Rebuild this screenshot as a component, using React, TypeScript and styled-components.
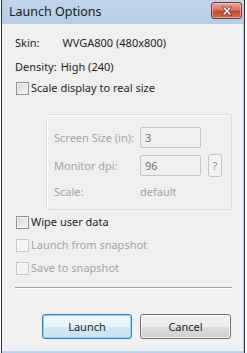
import React from "react";
import styled, { createGlobalStyle } from "styled-components";

const GlobalStyle = createGlobalStyle`
  html, body {
    margin: 0;
    padding: 0;
    background: #ffffff;
  }
  body {
    font-family: "Noto Sans", "Open Sans", sans-serif;
    font-size: 11px;
    color: #1e1e1e;
  }
`;

const Page = styled.div`
  width: 247px;
  height: 353px;
  padding-left: 1px;
  box-sizing: border-box;
`;

const Window = styled.div`
  width: 244px;
  height: 353px;
  box-sizing: border-box;
  border-left: 1px solid #2b2b2b;
  border-right: 1px solid #2b2b2b;
  background: #bcd2ea;
  display: flex;
  flex-direction: column;
`;

const TitleBar = styled.div`
  height: 24px;
  flex: none;
  display: flex;
  align-items: center;
  justify-content: space-between;
  padding: 0 2px 0 7px;
  background: linear-gradient(#c0d5ec, #bad0e9 60%, #b8cee8);
`;

const Title = styled.span`
  font-size: 12.5px;
  color: #1a1a1a;
  margin-top: -2px;
`;

const CloseButton = styled.button`
  width: 31px;
  height: 17px;
  margin-top: -3px;
  padding: 0;
  border: 1px solid #6e3a34;
  border-radius: 3px;
  background: linear-gradient(#e4a79c, #d67766 45%, #c4472f 55%, #cf6a50);
  box-shadow: inset 0 0 0 1px rgba(255, 220, 210, 0.5);
  display: flex;
  align-items: center;
  justify-content: center;
`;

const Body = styled.div`
  flex: 1;
  margin: 0 1px 3px 0;
  border-left: 1px solid #fafafa;
  background: #f0f0f0;
  display: flex;
  flex-direction: column;
  padding: 11px 11px 12px 12px;
`;

const InfoRow = styled.div<{ $gap: number; $mt?: number }>`
  display: flex;
  height: 16px;
  align-items: center;
  line-height: 16px;
  gap: ${(p) => p.$gap}px;
  margin-top: ${(p) => p.$mt ?? 0}px;
`;

const CheckRow = styled.label<{ $mt: number; $disabled?: boolean }>`
  display: flex;
  align-items: center;
  height: 16px;
  line-height: 16px;
  gap: 2px;
  margin-top: ${(p) => p.$mt}px;
  padding-left: 1px;
  color: ${(p) => (p.$disabled ? "#a3a3a3" : "#1e1e1e")};
`;

const Box = styled.span<{ $disabled?: boolean }>`
  width: 13px;
  height: 13px;
  box-sizing: border-box;
  flex: none;
  border: 1px solid ${(p) => (p.$disabled ? "#c9c9c9" : "#8e8f8f")};
  background: ${(p) =>
    p.$disabled
      ? "#f4f4f4"
      : "linear-gradient(135deg, #d2d2d2, #e6e6e6 50%, #f6f6f6)"};
  box-shadow: inset 0 0 0 1px ${(p) => (p.$disabled ? "#f8f8f8" : "#f4f4f4")};
`;

const Group = styled.div`
  margin: 18px 0 0 31px;
  width: 186px;
  height: 96px;
  box-sizing: border-box;
  border: 1px solid #d5dfe5;
  border-radius: 3px;
  box-shadow: inset 1px 1px 0 #ffffff;
  padding: 12px 0 0 7px;
  display: grid;
  grid-template-columns: 79px 61px 14px;
  grid-template-rows: 21px 23px 16px;
  column-gap: 7px;
  row-gap: 6px;
  align-items: center;
  white-space: nowrap;
  color: #a3a3a3;
`;

const Field = styled.div`
  height: 21px;
  box-sizing: border-box;
  border: 1px solid #c4c4c4;
  border-radius: 2px;
  background: #f0f0f0;
  color: #6d6d6d;
  padding-left: 4px;
  line-height: 19px;
`;

const HelpButton = styled.div`
  height: 23px;
  box-sizing: border-box;
  border: 1px solid #c3c3c3;
  border-radius: 3px;
  background: #f4f4f4;
  color: #8b90a6;
  text-align: center;
  line-height: 21px;
`;

const Separator = styled.div`
  height: 1px;
  margin: 11px 0 0 0;
  width: 217px;
  background: #a0a0a0;
  box-shadow: 0 1px 0 #ffffff;
`;

const ButtonRow = styled.div`
  display: flex;
  justify-content: flex-end;
  gap: 8px;
  margin-top: 26px;
  padding-right: 1px;
`;

const DialogButton = styled.button<{ $primary?: boolean }>`
  width: ${(p) => (p.$primary ? 90 : 91)}px;
  height: 25px;
  padding: 0;
  font-family: inherit;
  font-size: 11px;
  color: #1e1e1e;
  border-radius: 3px;
  border: 1px solid ${(p) => (p.$primary ? "#3c7fb1" : "#707070")};
  background: ${(p) =>
    p.$primary
      ? "linear-gradient(#f1f8fc, #e7f2f9 50%, #d5e8f4 51%, #c9e1f1)"
      : "linear-gradient(#f2f2f2, #ebebeb 50%, #dddddd 51%, #cfcfcf)"};
  box-shadow: ${(p) =>
    p.$primary
      ? "inset 0 0 0 1px #8fd3f4"
      : "inset 0 0 0 1px rgba(255,255,255,0.7)"};
`;

function CloseGlyph() {
  return (
    <svg width="14" height="10" viewBox="0 0 14 10">
      <path
        d="M2 1 L5 1 L7 3.5 L9 1 L12 1 L8.6 5 L12 9 L9 9 L7 6.5 L5 9 L2 9 L5.4 5 Z"
        fill="#ffffff"
        stroke="#5a2a26"
        strokeWidth="0.8"
        strokeLinejoin="round"
      />
    </svg>
  );
}

function Check({
  label,
  mt,
  disabled,
}: {
  label: string;
  mt: number;
  disabled?: boolean;
}) {
  return (
    <CheckRow $mt={mt} $disabled={disabled}>
      <Box $disabled={disabled} />
      {label}
    </CheckRow>
  );
}

export default function App() {
  return (
    <Page>
      <GlobalStyle />
      <Window>
        <TitleBar>
          <Title>Launch Options</Title>
          <CloseButton aria-label="Close">
            <CloseGlyph />
          </CloseButton>
        </TitleBar>
        <Body>
          <InfoRow $gap={23}>
            <span>Skin:</span>
            <span>WVGA800 (480x800)</span>
          </InfoRow>
          <InfoRow $gap={4} $mt={8}>
            <span>Density:</span>
            <span>High (240)</span>
          </InfoRow>
          <Check label="Scale display to real size" mt={5} />
          <Group>
            <span>Screen Size (in):</span>
            <Field>3</Field>
            <span />
            <span>Monitor dpi:</span>
            <Field>96</Field>
            <HelpButton>?</HelpButton>
            <span>Scale:</span>
            <span>default</span>
            <span />
          </Group>
          <Check label="Wipe user data" mt={4} />
          <Check label="Launch from snapshot" mt={7} disabled />
          <Check label="Save to snapshot" mt={7} disabled />
          <Separator />
          <ButtonRow>
            <DialogButton $primary>Launch</DialogButton>
            <DialogButton>Cancel</DialogButton>
          </ButtonRow>
        </Body>
      </Window>
    </Page>
  );
}
